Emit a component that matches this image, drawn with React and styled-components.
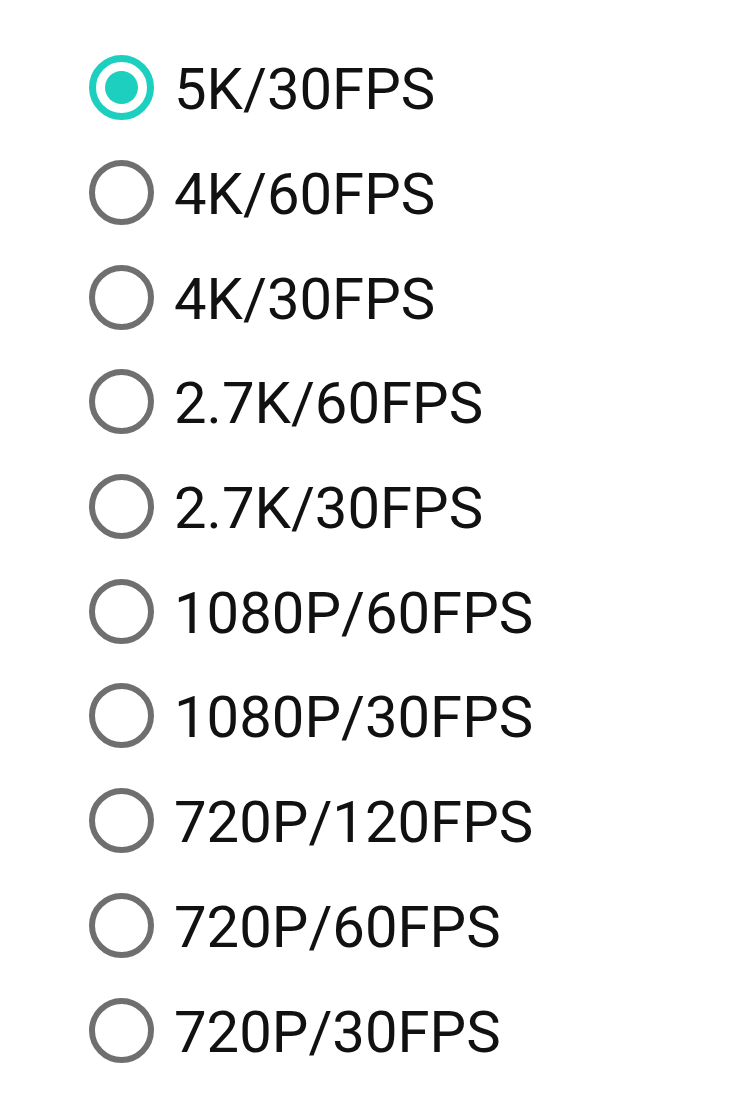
import React from 'react';
import styled, { createGlobalStyle } from 'styled-components';

const options = [
  '5K/30FPS',
  '4K/60FPS',
  '4K/30FPS',
  '2.7K/60FPS',
  '2.7K/30FPS',
  '1080P/60FPS',
  '1080P/30FPS',
  '720P/120FPS',
  '720P/60FPS',
  '720P/30FPS',
];

const GlobalStyle = createGlobalStyle`
  html, body {
    margin: 0;
    padding: 0;
    background: #ffffff;
  }
`;

const List = styled.div`
  display: flex;
  flex-direction: column;
  padding: 35.5px 0 0 89px;
  font-family: Roboto, "Liberation Sans", sans-serif;
`;

const Row = styled.label`
  display: flex;
  align-items: center;
  height: 104.7px;
  gap: 20px;
  cursor: pointer;
`;

const Radio = styled.span`
  box-sizing: border-box;
  width: 65px;
  height: 65px;
  border-radius: 50%;
  border: ${p => (p.$checked ? '7px solid #1ccfbf' : '6px solid #6f6f6f')};
  display: flex;
  align-items: center;
  justify-content: center;
  flex-shrink: 0;
`;

const Dot = styled.span`
  width: 33px;
  height: 33px;
  border-radius: 50%;
  background: #1ccfbf;
`;

const Text = styled.span`
  font-size: 58px;
  color: #111111;
  line-height: 1;
  padding-top: 3px;
`;

export default function App() {
  const selected = 0;
  return (
    <>
      <GlobalStyle />
      <List>
        {options.map((o, i) => (
          <Row key={o}>
            <Radio $checked={i === selected}>{i === selected && <Dot />}</Radio>
            <Text>{o}</Text>
          </Row>
        ))}
      </List>
    </>
  );
}
